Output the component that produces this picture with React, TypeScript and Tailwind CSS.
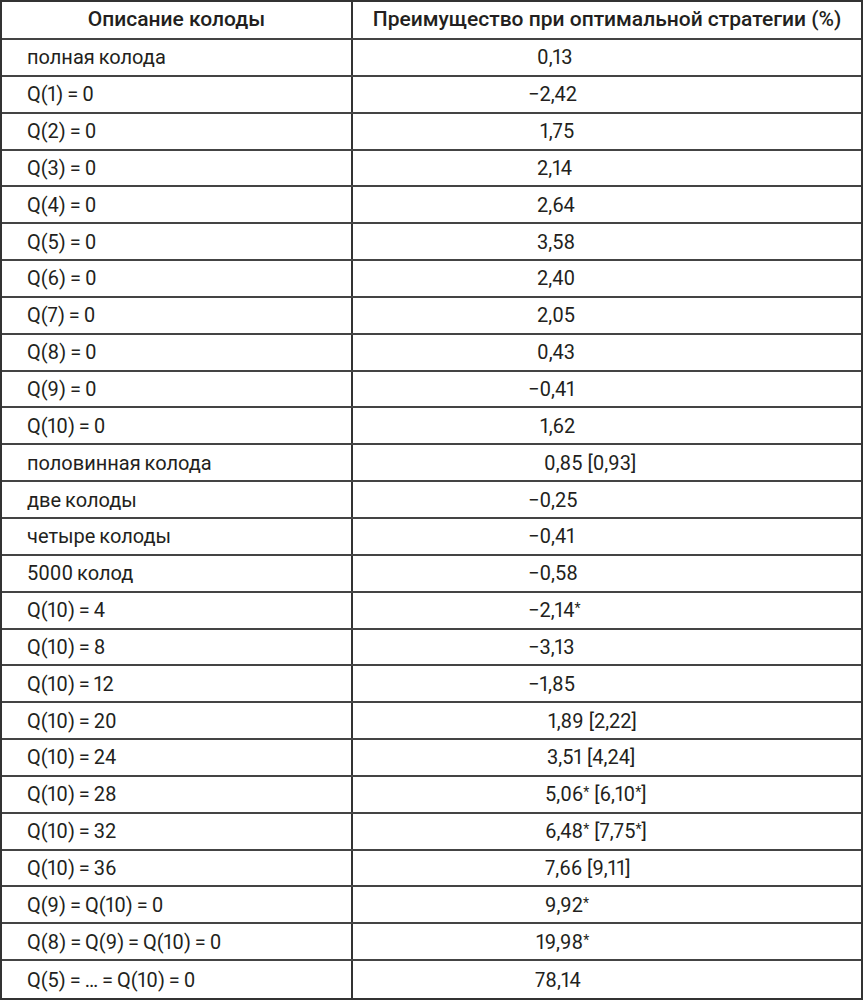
import React from "react";

type Row = [string, string, string];

const rows: Row[] = [
  ["полная колода", "0,13", "pl-[184px]"],
  ["Q(1) = 0", "−2,42", "pl-[175px]"],
  ["Q(2) = 0", "1,75", "pl-[187px]"],
  ["Q(3) = 0", "2,14", "pl-[184px]"],
  ["Q(4) = 0", "2,64", "pl-[184px]"],
  ["Q(5) = 0", "3,58", "pl-[184px]"],
  ["Q(6) = 0", "2,40", "pl-[184px]"],
  ["Q(7) = 0", "2,05", "pl-[184px]"],
  ["Q(8) = 0", "0,43", "pl-[184px]"],
  ["Q(9) = 0", "−0,41", "pl-[175px]"],
  ["Q(10) = 0", "1,62", "pl-[187px]"],
  ["половинная колода", "0,85 [0,93]", "pl-[191px]"],
  ["две колоды", "−0,25", "pl-[175px]"],
  ["четыре колоды", "−0,41", "pl-[175px]"],
  ["5000 колод", "−0,58", "pl-[175px]"],
  ["Q(10) = 4", "−2,14*", "pl-[175px]"],
  ["Q(10) = 8", "−3,13", "pl-[175px]"],
  ["Q(10) = 12", "−1,85", "pl-[175px]"],
  ["Q(10) = 20", "1,89 [2,22]", "pl-[195px]"],
  ["Q(10) = 24", "3,51 [4,24]", "pl-[194px]"],
  ["Q(10) = 28", "5,06* [6,10*]", "pl-[192px]"],
  ["Q(10) = 32", "6,48* [7,75*]", "pl-[192px]"],
  ["Q(10) = 36", "7,66 [9,11]", "pl-[192px]"],
  ["Q(9) = Q(10) = 0", "9,92*", "pl-[192px]"],
  ["Q(8) = Q(9) = Q(10) = 0", "19,98*", "pl-[183px]"],
  ["Q(5) = … = Q(10) = 0", "78,14", "pl-[182px]"],
];

function Value({ text }: { text: string }) {
  const parts = text.split("*");
  return (
    <span>
      {parts.map((p, i) => (
        <React.Fragment key={i}>
          {p}
          {i < parts.length - 1 && (
            <span className="text-[14px] align-[4px]">*</span>
          )}
        </React.Fragment>
      ))}
    </span>
  );
}

export default function App() {
  return (
    <div
      className="w-[863px] h-[1000px] bg-white text-[#231f20] border-2 border-[#333] flex flex-col proportional-nums"
      style={{ fontFamily: "Roboto, 'Noto Sans', sans-serif" }}
    >
      <div className="flex h-[38px] shrink-0 border-b-2 border-[#444] text-[21px] font-medium">
        <div className="w-[351px] shrink-0 border-r-2 border-[#333] flex items-center justify-center">
          Описание колоды
        </div>
        <div className="flex-1 flex items-center justify-center">
          Преимущество при оптимальной стратегии (%)
        </div>
      </div>
      {rows.map((r, i) => (
        <div
          key={i}
          className={
            i === rows.length - 1
              ? "flex flex-1 text-[20px]"
              : "flex h-[36.85px] shrink-0 border-b-2 border-[#444] text-[20px]"
          }
        >
          <div className="w-[351px] shrink-0 border-r-2 border-[#333] flex items-center pl-[25px] [word-spacing:-1px]">
            {r[0]}
          </div>
          <div className={"flex-1 flex items-center " + r[2]}>
            <Value text={r[1]} />
          </div>
        </div>
      ))}
    </div>
  );
}
